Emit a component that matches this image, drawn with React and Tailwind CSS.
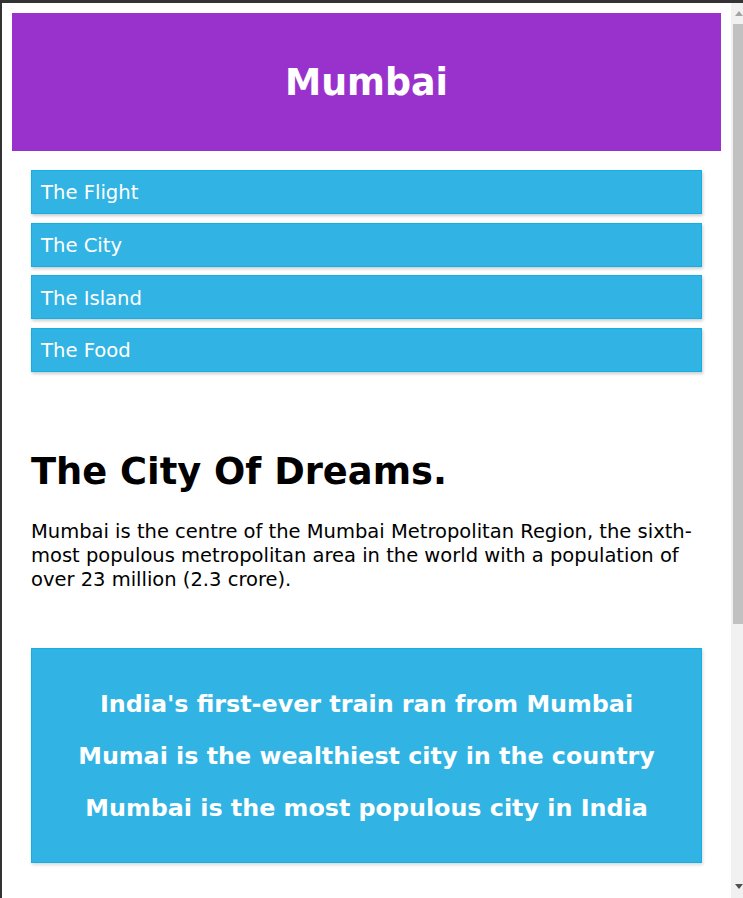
import React from "react";

const links = ["The Flight", "The City", "The Island", "The Food"];

const facts = [
  "India's first-ever train ran from Mumbai",
  "Mumai is the wealthiest city in the country",
  "Mumbai is the most populous city in India",
];

const App = () => {
  return (
    <div
      className="flex h-[898px] w-[743px] overflow-hidden border-t-[3px] border-l-[2px] border-[#333333] bg-white"
      style={{ fontFamily: '"DejaVu Sans", Verdana, sans-serif' }}
    >
      {/* Page */}
      <div className="min-w-0 flex-1">
        <header className="mx-[10px] mt-[10px] flex h-[138px] items-center justify-center bg-[#9932cc] pt-[3px]">
          <h1 className="text-[36.4px] font-bold text-white">Mumbai</h1>
        </header>

        <div className="px-[29px]">
          {/* Nav */}
          <nav className="mt-[19px] flex flex-col gap-[8.67px]">
            {links.map((link) => (
              <a
                key={link}
                href="#"
                className="flex h-[44px] items-center border border-[#12aee6] bg-[#31b4e4] px-[9px] pt-[2px] text-[19.6px] text-white shadow-[1px_2px_3px_rgba(0,0,0,0.2)]"
              >
                {link}
              </a>
            ))}
          </nav>

          <h2 className="mt-[79px] text-[36.8px] font-bold leading-[42px] text-black">
            The City Of Dreams.
          </h2>

          <p className="mt-[27px] text-[19.5px] leading-[24px] text-black">
            Mumbai is the centre of the Mumbai Metropolitan Region, the
            sixth-most populous metropolitan area in the world with a
            population of over 23 million (2.3 crore).
          </p>

          {/* Facts box */}
          <div className="mt-[56px] border border-[#12aee6] bg-[#31b4e4] pt-[29px] pb-[28px] text-center shadow-[1px_2px_3px_rgba(0,0,0,0.15)]">
            {facts.map((fact) => (
              <p
                key={fact}
                className="text-[23.8px] font-bold leading-[52px] text-white"
              >
                {fact}
              </p>
            ))}
          </div>
        </div>
      </div>

      {/* Scrollbar */}
      <div className="flex w-[12px] shrink-0 flex-col bg-[#f1f1f1]">
        <div className="flex h-[21px] items-center justify-center pl-[3px]">
          <svg width="8" height="5" viewBox="0 0 8 5">
            <path d="M0 5 L4 0 L8 5 Z" fill="#a3a3a3" />
          </svg>
        </div>
        <div className="ml-[2px] h-[600px] bg-[#c1c1c1]" />
        <div className="mt-auto flex h-[14px] items-start justify-center pl-[3px]">
          <svg width="8" height="5" viewBox="0 0 8 5">
            <path d="M0 0 L8 0 L4 5 Z" fill="#505050" />
          </svg>
        </div>
      </div>
    </div>
  );
};

export default App;
